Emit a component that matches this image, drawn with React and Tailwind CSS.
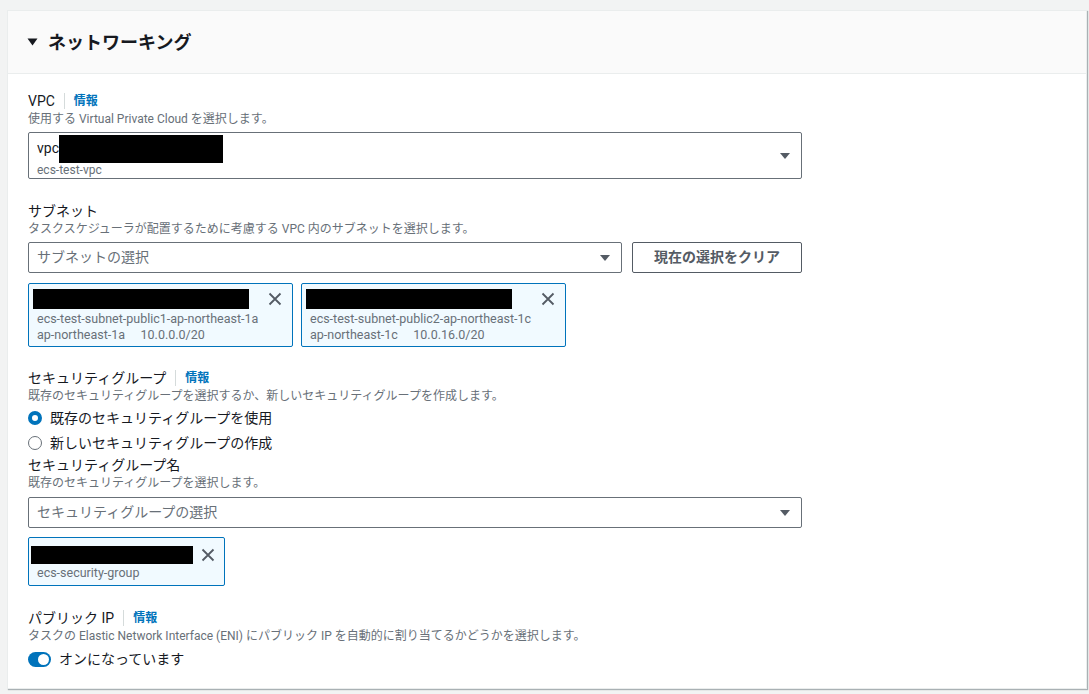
import React from 'react';

const FONT = { fontFamily: 'Roboto, "Noto Sans CJK JP", sans-serif' };

const Caret = () => (
  <svg width="12" height="8" viewBox="0 0 12 8" className="shrink-0">
    <path d="M1 1 L11 1 L6 7 Z" fill="#545b64" />
  </svg>
);

const CloseIcon = () => (
  <svg width="14" height="14" viewBox="0 0 14 14" className="shrink-0">
    <path d="M1.5 1.5 L12.5 12.5 M12.5 1.5 L1.5 12.5" stroke="#545b64" strokeWidth="1.8" fill="none" />
  </svg>
);

const Label = ({ children, info }) => (
  <div className="flex items-center h-[20px] text-[14px] text-[#16191f]">
    <span>{children}</span>
    {info && (
      <>
        <span className="mx-[9px] h-[16px] w-px bg-[#d5dbdb]" />
        <span className="text-[#0073bb] font-bold text-[12px]">情報</span>
      </>
    )}
  </div>
);

const Desc = ({ children }) => (
  <div className="h-[16px] leading-[16px] text-[12px] text-[#687078]">{children}</div>
);

const Select = ({ placeholder }) => (
  <div className="flex items-center justify-between h-[31px] border border-[#687078] rounded-[2px] bg-white pl-[8px] pr-[10px]">
    <span className="text-[14px] text-[#687078]">{placeholder}</span>
    <Caret />
  </div>
);

const Token = ({ width, barWidth, lines }) => (
  <div className={`${width} border border-[#0073bb] bg-[#f1faff] rounded-[2px] pl-[8px] pr-[10px] pt-[5px] pb-[3px]`}>
    <div className="flex items-center justify-between">
      <div className={`${barWidth} h-[20px] bg-black -ml-[4px]`} />
      <CloseIcon />
    </div>
    <div className="mt-[2px]">
      {lines.map((l, i) => (
        <div key={i} className="h-[16px] leading-[16px] text-[12.5px] text-[#687078] whitespace-pre">
          {l}
        </div>
      ))}
    </div>
  </div>
);

export default function App() {
  return (
    <div className="min-h-[694px] bg-[#f2f3f3] pt-[10px] pl-[7px] pr-[2px]" style={FONT}>
      <div className="bg-white border border-[#eaeded] shadow-[1px_1px_1px_0_rgba(0,28,36,0.3)]">
        <div className="h-[63px] bg-[#fafafa] border-b border-[#eaeded] flex items-center pl-[19px]">
          <svg width="11" height="8" viewBox="0 0 11 8" className="mr-[10px]">
            <path d="M0.5 0.5 L10.5 0.5 L5.5 7.5 Z" fill="#16191f" />
          </svg>
          <span className="text-[18px] font-bold text-[#16191f]">ネットワーキング</span>
        </div>

        <div className="pl-[20px] pt-[17px] pb-[19px]">
          <Label info>VPC</Label>
          <Desc>使用する Virtual Private Cloud を選択します。</Desc>
          <div className="mt-[5px] w-[774px] h-[47px] border border-[#687078] rounded-[2px] flex items-center justify-between pl-[8px] pr-[10px]">
            <div>
              <div className="flex items-center h-[28px]">
                <span className="text-[14px] text-[#16191f]">vpc</span>
                <span className="w-[164px] h-[28px] bg-black" />
              </div>
              <div className="text-[12px] leading-[14px] text-[#687078]">ecs-test-vpc</div>
            </div>
            <Caret />
          </div>

          <div className="mt-[22px]">
            <Label>サブネット</Label>
            <Desc>タスクスケジューラが配置するために考慮する VPC 内のサブネットを選択します。</Desc>
            <div className="mt-[5px] flex gap-[10px] w-[774px]">
              <div className="flex-1">
                <Select placeholder="サブネットの選択" />
              </div>
              <button className="w-[170px] h-[31px] border border-[#545b64] rounded-[2px] text-[14px] font-bold text-[#545b64] bg-white">
                現在の選択をクリア
              </button>
            </div>
            <div className="mt-[10px] flex gap-[8px]">
              <Token
                width="w-[265px]"
                barWidth="w-[216px]"
                lines={['ecs-test-subnet-public1-ap-northeast-1a', 'ap-northeast-1a     10.0.0.0/20']}
              />
              <Token
                width="w-[265px]"
                barWidth="w-[206px]"
                lines={['ecs-test-subnet-public2-ap-northeast-1c', 'ap-northeast-1c     10.0.16.0/20']}
              />
            </div>
          </div>

          <div className="mt-[21px]">
            <Label info>セキュリティグループ</Label>
            <Desc>既存のセキュリティグループを選択するか、新しいセキュリティグループを作成します。</Desc>
            <div className="mt-[4px] flex items-center h-[20px] gap-[8px] text-[14px] text-[#16191f]">
              <span className="w-[14px] h-[14px] rounded-full border-[4px] border-[#0073bb] bg-white" />
              <span>既存のセキュリティグループを使用</span>
            </div>
            <div className="mt-[5px] flex items-center h-[20px] gap-[8px] text-[14px] text-[#16191f]">
              <span className="w-[14px] h-[14px] rounded-full border-[1.5px] border-[#687078] bg-white" />
              <span>新しいセキュリティグループの作成</span>
            </div>
            <div className="mt-[2px]">
              <Label>セキュリティグループ名</Label>
              <Desc>既存のセキュリティグループを選択します。</Desc>
              <div className="mt-[6px] w-[774px]">
                <Select placeholder="セキュリティグループの選択" />
              </div>
              <div className="mt-[9px] w-[197px] border border-[#0073bb] bg-[#f1faff] rounded-[2px] pl-[2px] pr-[9px] pt-[8px] pb-[4px]">
                <div className="flex items-center justify-between">
                  <div className="w-[162px] h-[18px] bg-black" />
                  <CloseIcon />
                </div>
                <div className="pl-[6px] mt-[1px] h-[16px] leading-[16px] text-[12.5px] text-[#687078]">ecs-security-group</div>
              </div>
            </div>
          </div>

          <div className="mt-[22px]">
            <Label info>パブリック IP</Label>
            <Desc>タスクの Elastic Network Interface (ENI) にパブリック IP を自動的に割り当てるかどうかを選択します。</Desc>
            <div className="mt-[5px] flex items-center h-[20px] gap-[8px] text-[14px] text-[#16191f]">
              <span className="w-[23px] h-[15px] rounded-full bg-[#0073bb] flex items-center justify-end pr-[2px]">
                <span className="w-[11px] h-[11px] rounded-full bg-white" />
              </span>
              <span>オンになっています</span>
            </div>
          </div>
        </div>
      </div>
    </div>
  );
}
